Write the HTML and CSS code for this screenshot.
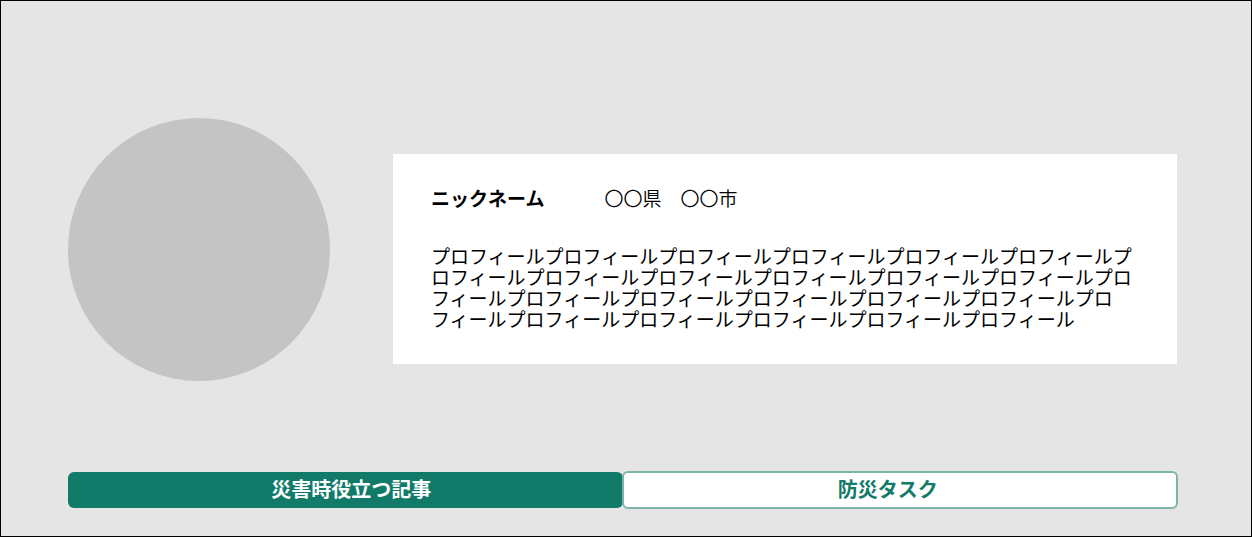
FILE: index.html
```html
<!DOCTYPE html>
<html lang="ja">
<head>
<meta charset="utf-8">
<title>プロフィール</title>
<link rel="stylesheet" href="styles.css">
</head>
<body>
<main class="page">
  <section class="profile">
    <div class="avatar"></div>
    <div class="card">
      <div class="card-head">
        <h1 class="nickname">ニックネーム</h1>
        <p class="region">〇〇県　〇〇市</p>
      </div>
      <p class="bio">プロフィールプロフィールプロフィールプロフィールプロフィールプロフィールプロフィールプロフィールプロフィールプロフィールプロフィールプロフィールプロフィールプロフィールプロフィールプロフィールプロフィールプロフィールプロ
フィールプロフィールプロフィールプロフィールプロフィールプロフィール</p>
    </div>
  </section>
  <nav class="tabs">
    <button class="tab tab-active" type="button">災害時役立つ記事</button>
    <button class="tab tab-outline" type="button">防災タスク</button>
  </nav>
</main>
</body>
</html>
```
FILE: styles.css
```css
* {
  box-sizing: border-box;
}

body {
  margin: 0;
  color: #000;
  font-family: "Noto Sans CJK JP", sans-serif;
}

.page {
  min-height: 100vh;
  padding: 117px 74px 27px 67px;
  border: 1px solid #000;
  background: #e5e5e5;
}

.profile {
  display: flex;
  align-items: flex-start;
  gap: 63px;
}

.avatar {
  flex: none;
  width: 262px;
  height: 263px;
  border-radius: 50%;
  background: #c4c4c4;
}

.card {
  flex: 1;
  min-height: 210px;
  margin-top: 36px;
  padding: 33px 38px;
  background: #fff;
}

.card-head {
  display: flex;
  gap: 60px;
  margin-bottom: 37px;
}

.nickname,
.region,
.bio {
  margin: 0;
  font-size: 19px;
  line-height: 21px;
}

.region {
  font-weight: 350;
}

.bio {
  font-weight: 400;
  white-space: pre-line;
}

.nickname {
  font-weight: 700;
}

.tabs {
  display: grid;
  grid-template-columns: 1fr 1fr;
  align-items: center;
  margin-top: 90px;
}

.tab {
  border-radius: 6px;
  font: 700 20px/29px "Noto Sans CJK JP", sans-serif;
}

.tab-active {
  height: 36px;
  padding: 0 0 4px 12px;
  border: 0;
  background: #117a69;
  color: #fff;
}

.tab-outline {
  height: 38px;
  margin: 0 -1px;
  padding: 0 24px 4px 0;
  border: 2px solid #7db5ab;
  background: #fff;
  color: #117a69;
}
```
